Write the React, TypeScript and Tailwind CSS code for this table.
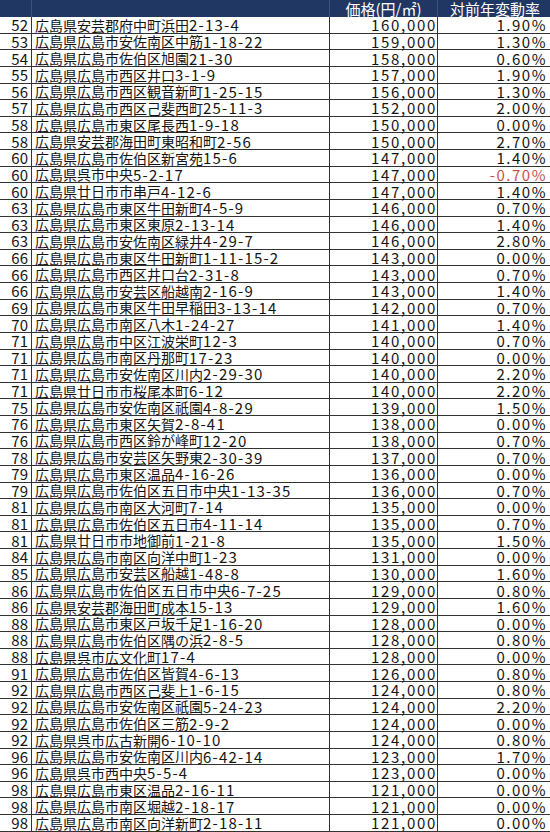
import React from "react";

const rows: [string, string, string, string][] = [
  ["52", "広島県安芸郡府中町浜田2-13-4", "160,000", "1.90%"],
  ["53", "広島県広島市安佐南区中筋1-18-22", "159,000", "1.30%"],
  ["54", "広島県広島市佐伯区旭園21-30", "158,000", "0.60%"],
  ["55", "広島県広島市西区井口3-1-9", "157,000", "1.90%"],
  ["56", "広島県広島市西区観音新町1-25-15", "156,000", "1.30%"],
  ["57", "広島県広島市西区己斐西町25-11-3", "152,000", "2.00%"],
  ["58", "広島県広島市東区尾長西1-9-18", "150,000", "0.00%"],
  ["58", "広島県安芸郡海田町東昭和町2-56", "150,000", "2.70%"],
  ["60", "広島県広島市佐伯区新宮苑15-6", "147,000", "1.40%"],
  ["60", "広島県呉市中央5-2-17", "147,000", "-0.70%"],
  ["60", "広島県廿日市市串戸4-12-6", "147,000", "1.40%"],
  ["63", "広島県広島市東区牛田新町4-5-9", "146,000", "0.70%"],
  ["63", "広島県広島市東区東原2-13-14", "146,000", "1.40%"],
  ["63", "広島県広島市安佐南区緑井4-29-7", "146,000", "2.80%"],
  ["66", "広島県広島市東区牛田新町1-11-15-2", "143,000", "0.00%"],
  ["66", "広島県広島市西区井口台2-31-8", "143,000", "0.70%"],
  ["66", "広島県広島市安芸区船越南2-16-9", "143,000", "1.40%"],
  ["69", "広島県広島市東区牛田早稲田3-13-14", "142,000", "0.70%"],
  ["70", "広島県広島市南区八木1-24-27", "141,000", "1.40%"],
  ["71", "広島県広島市中区江波栄町12-3", "140,000", "0.70%"],
  ["71", "広島県広島市南区丹那町17-23", "140,000", "0.00%"],
  ["71", "広島県広島市安佐南区川内2-29-30", "140,000", "2.20%"],
  ["71", "広島県廿日市市桜尾本町6-12", "140,000", "2.20%"],
  ["75", "広島県広島市安佐南区祇園4-8-29", "139,000", "1.50%"],
  ["76", "広島県広島市東区矢賀2-8-41", "138,000", "0.00%"],
  ["76", "広島県広島市西区鈴が峰町12-20", "138,000", "0.70%"],
  ["78", "広島県広島市安芸区矢野東2-30-39", "137,000", "0.70%"],
  ["79", "広島県広島市東区温品4-16-26", "136,000", "0.00%"],
  ["79", "広島県広島市佐伯区五日市中央1-13-35", "136,000", "0.70%"],
  ["81", "広島県広島市南区大河町7-14", "135,000", "0.00%"],
  ["81", "広島県広島市佐伯区五日市4-11-14", "135,000", "0.70%"],
  ["81", "広島県廿日市市地御前1-21-8", "135,000", "1.50%"],
  ["84", "広島県広島市南区向洋中町1-23", "131,000", "0.00%"],
  ["85", "広島県広島市安芸区船越1-48-8", "130,000", "1.60%"],
  ["86", "広島県広島市佐伯区五日市中央6-7-25", "129,000", "0.80%"],
  ["86", "広島県安芸郡海田町成本15-13", "129,000", "1.60%"],
  ["88", "広島県広島市東区戸坂千足1-16-20", "128,000", "0.00%"],
  ["88", "広島県広島市佐伯区隅の浜2-8-5", "128,000", "0.80%"],
  ["88", "広島県呉市広文化町17-4", "128,000", "0.00%"],
  ["91", "広島県広島市佐伯区皆賀4-6-13", "126,000", "0.80%"],
  ["92", "広島県広島市西区己斐上1-6-15", "124,000", "0.80%"],
  ["92", "広島県広島市安佐南区祇園5-24-23", "124,000", "2.20%"],
  ["92", "広島県広島市佐伯区三筋2-9-2", "124,000", "0.00%"],
  ["92", "広島県呉市広古新開6-10-10", "124,000", "0.80%"],
  ["96", "広島県広島市安佐南区川内6-42-14", "123,000", "1.70%"],
  ["96", "広島県呉市西中央5-5-4", "123,000", "0.00%"],
  ["98", "広島県広島市東区温品2-16-11", "121,000", "0.00%"],
  ["98", "広島県広島市南区堀越2-18-17", "121,000", "0.00%"],
  ["98", "広島県広島市南区向洋新町2-18-11", "121,000", "0.00%"],
];

function Address({ text }: { text: string }) {
  const m = text.match(/^(\D+)(.*)$/);
  const head = m ? m[1] : text;
  const tail = m ? m[2] : "";
  return (
    <>
      <span className="text-[14px]">{head}</span>
      <span className="text-[15px] tracking-[1.2px]">{tail}</span>
    </>
  );
}

export default function App() {
  return (
    <div
      className="w-[550px] h-[832px] bg-white overflow-hidden text-[#141414]"
      style={{ fontFamily: '"Noto Sans CJK JP", "Noto Sans", sans-serif' }}
    >
      <div className="grid grid-cols-[32px_298px_108px_112px] h-[17px] bg-[#203764] text-white text-[15px] leading-none">
        <div className="border-r border-[#3d5283]" />
        <div className="border-r border-[#3d5283]" />
        <div className="border-r border-[#3d5283] flex items-end justify-center pb-[1px]">価格(円/㎡)</div>
        <div className="flex items-end justify-center pb-[1px] pl-[2px]">対前年変動率</div>
      </div>
      {rows.map((r, i) => (
        <div
          key={i}
          className="grid grid-cols-[32px_298px_108px_112px] h-[16.63px] border-b border-[#333] leading-none"
        >
          <div className="border-r border-[#333] flex items-center justify-end pr-[3px] text-[15px]">{r[0]}</div>
          <div className="border-r border-[#333] flex items-center pl-[3px] whitespace-nowrap">
            <Address text={r[1]} />
          </div>
          <div className="border-r border-[#333] flex items-center justify-end pr-0 text-[15px] tracking-[1.7px]">{r[2]}</div>
          <div
            className={
              "flex items-center justify-end pr-[3px] text-[15px] tracking-[1.5px] " +
              (r[3].startsWith("-") ? "text-[#c8504f]" : "")
            }
          >
            {r[3]}
          </div>
        </div>
      ))}
    </div>
  );
}
